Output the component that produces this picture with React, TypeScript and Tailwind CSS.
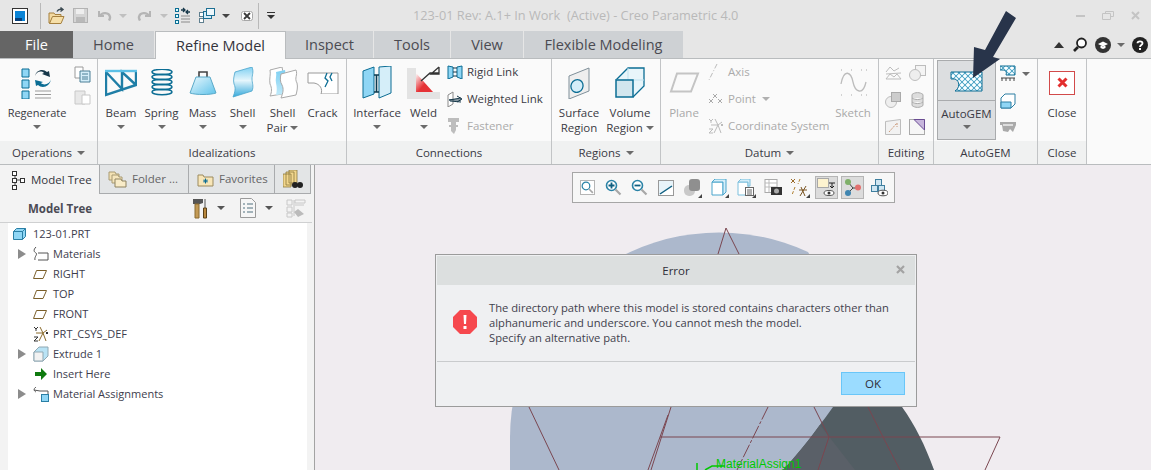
import type { ReactNode } from "react";

const blue = "#0b6d94";
const sky = "#8fd6f5";
const pale = "#d5eef9";

function Svg({ w, h, children, className }: { w: number; h: number; children: ReactNode; className?: string }) {
  return (
    <svg width={w} height={h} viewBox={`0 0 ${w} ${h}`} className={className} fill="none">
      {children}
    </svg>
  );
}

function Caret({ color = "#6b6b6b" }: { color?: string }) {
  return (
    <Svg w={8} h={4} className="shrink-0">
      <path d="M0 0h8L4 4z" fill={color} />
    </Svg>
  );
}

/* ---------- quick access icons ---------- */

function AppIcon() {
  return (
    <Svg w={16} h={16}>
      <rect x="0.500" y="0.500" width="15" height="15" fill="#fff" stroke="#333" />
      <rect x="3" y="3" width="10" height="10" fill="#0a84d6" />
      <path d="M3 10h7v3H3z" fill="#063f7a" />
    </Svg>
  );
}

function OpenIcon() {
  return (
    <Svg w={17} h={18}>
      <path d="M1 6h5l1 1.500h6v2.500H5L2 16H1z" fill="#f3d9a0" stroke="#a5803f" />
      <path d="M4.500 9.500H16L13 16.500H1.500z" fill="#f6dfa8" stroke="#a5803f" />
      <path d="M9 4.500C10 2.500 12 2 14 2.500M12.500 0.500l2.500 2-2.500 2" stroke="#3c4a52" strokeWidth="1.400" />
    </Svg>
  );
}

function SaveIcon() {
  return (
    <Svg w={15} h={15}>
      <rect x="0.500" y="0.500" width="14" height="14" fill="#d4d4d4" stroke="#b3b3b3" />
      <rect x="3" y="1" width="8" height="5" fill="#eee" />
      <rect x="3" y="9" width="9" height="5" fill="#b9b9b9" />
    </Svg>
  );
}

function UndoIcon({ flip }: { flip?: boolean }) {
  return (
    <Svg w={15} h={11} className={flip ? "-scale-x-100" : ""}>
      <path d="M2 1v5h5" stroke="#b5b5b5" strokeWidth="2" />
      <path d="M3 6c2-4 9-4 10 1 .2 1.200-.4 2.500-1 3.500" stroke="#b5b5b5" strokeWidth="2.400" />
    </Svg>
  );
}

function RegenSmall() {
  return (
    <Svg w={16} h={17}>
      <rect x="0.500" y="1.500" width="3" height="3" stroke={blue} fill="#dff" />
      <rect x="0.500" y="7.500" width="3" height="3" stroke={blue} fill="#dff" />
      <rect x="0.500" y="13.500" width="3" height="3" stroke={blue} fill="#dff" />
      <path d="M6 9h9M6 12h9M6 15h9" stroke="#8a8a8a" />
      <path d="M6 3h4M8 1l2 2-2 2M15 5h-4M13 3l-2 2 2 2" stroke="#17384a" strokeWidth="1.300" />
    </Svg>
  );
}

function WindowsIcon() {
  return (
    <Svg w={16} h={15}>
      <rect x="0.500" y="4.500" width="4" height="4" fill="#fff" stroke="#5f7f8f" />
      <rect x="0.500" y="10.500" width="4" height="4" fill="#fff" stroke="#5f7f8f" />
      <rect x="4.500" y="3.500" width="8" height="7" fill="#d6edf8" stroke="#1c6f93" />
      <rect x="7.500" y="0.500" width="8" height="7" fill="#eef7fb" stroke="#1c6f93" />
    </Svg>
  );
}

function CloseWinIcon() {
  return (
    <Svg w={12} h={10}>
      <rect x="0.500" y="0.500" width="11" height="9" rx="2" fill="#fff" stroke="#a8a8a8" />
      <path d="M3 2l6 6M9 2L3 8" stroke="#3a3a3a" strokeWidth="1.800" />
    </Svg>
  );
}

function Sep() {
  return <div className="h-[26px] w-px bg-[#b9b9b9]" />;
}

/* ---------- ribbon icons ---------- */

function RegenerateIcon() {
  return (
    <Svg w={32} h={32}>
      <path d="M1 2h7v8H1zM1 13h7v8H1zM1 24h7v8H1z" fill={sky} stroke={blue} />
      <path d="M14 24h16M14 27.500h16M14 31h16" stroke="#9a9a9a" />
      <path d="M14 9c1-4 6-6 9-3l-2 1 8 3-1-6-2 1C22 1 15 3 14 9z" fill="#17384a" />
      <path d="M30 12c-1 5-7 7-10 4l2-1-8-2 1 6 2-1c4 4 12 2 13-6z" fill={blue} />
    </Svg>
  );
}

function BeamIcon() {
  return (
    <Svg w={32} h={28}>
      <path d="M1 3v23L31 16V3M1 3l16 17V3l14 13" stroke="#1f7ea6" strokeWidth="2.400" />
      <path d="M0 2h32" stroke="#5cc0e6" strokeWidth="2.400" />
    </Svg>
  );
}

function SpringIcon() {
  return (
    <Svg w={22} h={28}>
      {[3, 8, 13, 18, 23].map((y) => (
        <ellipse key={y} cx="11" cy={y} rx="10" ry="2.700" stroke={blue} strokeWidth="1.500" />
      ))}
    </Svg>
  );
}

function MassIcon() {
  return (
    <Svg w={28} h={25}>
      <path d="M10 7V2h8v5" stroke="#444" strokeWidth="1.600" />
      <path d="M7 7h14l6 16c-6 2-20 2-26 0z" fill="url(#m)" stroke="#5aa9c8" />
      <defs>
        <linearGradient id="m" x1="0" x2="1" y1="0" y2="1">
          <stop stopColor="#eaf8fe" />
          <stop offset="1" stopColor="#5fc3ea" />
        </linearGradient>
      </defs>
    </Svg>
  );
}

function ShellIcon() {
  return (
    <Svg w={22} h={31}>
      <path d="M3 5l17-5c2 5 0 8 0 12s2 7 0 12L1 30c2-5 3-9 1-13-1-4 0-8 1-12z" fill="url(#s)" stroke="#4aa5cc" strokeWidth=".8" />
      <defs>
        <linearGradient id="s" x1="0" x2="0" y1="0" y2="1">
          <stop stopColor="#7fd0f2" />
          <stop offset=".45" stopColor="#e6f6fc" />
          <stop offset="1" stopColor="#35a9db" />
        </linearGradient>
      </defs>
    </Svg>
  );
}

function ShellPairIcon() {
  return (
    <Svg w={32} h={32}>
      <path d="M3 3l12-3c2 5-1 9 0 14s1 9 0 13L3 29c2-4 2-8 0-12-1-5 1-10 0-14z" fill="#fff" stroke="#a9a9a9" />
      <path d="M9 5l9-2c1 5-1 8 0 12s1 8 0 12l-9 1c1-4 1-8 0-12-1-4 1-8 0-11z" fill="url(#s2)" />
      <path d="M14 7l15-4c2 5-2 8 1 13 1 4 0 8-1 12l-15 3c2-5 3-9 1-13-2-3-2-7-1-11z" fill="#fff" stroke="#a9a9a9" />
      <defs>
        <linearGradient id="s2" x1="0" x2="0" y1="0" y2="1">
          <stop stopColor="#7fd0f2" />
          <stop offset="1" stopColor="#bfe9f9" />
        </linearGradient>
      </defs>
    </Svg>
  );
}

function CrackIcon() {
  return (
    <Svg w={32} h={22}>
      <path d="M1 1h30v21H14c2-5-1-10-7-11H1z" fill="#fff" stroke="#9a9a9a" />
      <path d="M20 1l-2 5 3 3-3 6M25 1l-2 4 2 4" stroke={blue} strokeWidth="1.300" />
    </Svg>
  );
}

function InterfaceIcon() {
  return (
    <Svg w={30} h={33}>
      <path d="M1 5l11-4v27L1 32z" fill={sky} stroke={blue} />
      <path d="M17 1l12-1v27l-12 5z" fill={pale} stroke={blue} />
      <path d="M12 9h5M12 26h5M14.500 9v17" stroke="#0b3a4f" strokeWidth="1.600" />
    </Svg>
  );
}

function WeldIcon() {
  return (
    <Svg w={33} h={33}>
      <path d="M0 2h9v24h24v7H0z" fill="#e3e3e3" />
      <path d="M9 7v19h17z" fill="url(#w)" />
      <path d="M14 15l9-8h9M32 1v7h-8l8-7" stroke="#333" strokeWidth="1.300" />
      <defs>
        <linearGradient id="w" x1="0" x2="1" y1="0" y2="1">
          <stop stopColor="#fff" />
          <stop offset=".55" stopColor="#e53236" />
        </linearGradient>
      </defs>
    </Svg>
  );
}

function RigidIcon() {
  return (
    <Svg w={16} h={15}>
      <path d="M1 2l5 1v10l-5 2z" fill={sky} stroke={blue} />
      <path d="M15 2l-5 1v10l5 2z" fill={sky} stroke={blue} />
      <path d="M6 4h4M6 8h4M6 12h4" stroke="#17384a" />
    </Svg>
  );
}

function WeightedIcon() {
  return (
    <Svg w={17} h={16}>
      <path d="M1 4l5-3v12l-5 3z" fill="#fff" stroke="#8a8a8a" />
      <path d="M2 9l12-2M2 9l12 0M3 10l11 1M10 5l5 3-5 3" stroke="#17384a" />
    </Svg>
  );
}

function FastenerIcon() {
  return (
    <Svg w={13} h={16}>
      <path d="M1 0h11v4H1zM4 4h5v8l-2 4-3-3zM2 7h9v2H2z" fill="#bdbdbd" />
    </Svg>
  );
}

function SurfaceIcon() {
  return (
    <Svg w={22} h={32}>
      <path d="M1 9l20-8v23L1 32z" fill="#eee" stroke="#7f8f99" />
      <ellipse cx="9" cy="19" rx="6" ry="6.500" transform="rotate(25 9 19)" fill={pale} stroke={blue} strokeWidth="1.300" />
    </Svg>
  );
}

function VolumeIcon() {
  return (
    <Svg w={30} h={31}>
      <path d="M1 13L13 1h16v18L18 30" fill="#e8f5fa" stroke={blue} strokeWidth="1.300" />
      <path d="M13 1v12M13 13h16M13 13L1 13" stroke="#bfe1ee" />
      <rect x="1" y="13" width="17" height="17" fill="#d2e6ee" stroke={blue} strokeWidth="1.500" />
    </Svg>
  );
}

function PlaneIcon() {
  return (
    <Svg w={31} h={21}>
      <path d="M8 1.500h21L22 19.500H2z" fill="#fafafa" stroke="#c4c4c4" strokeWidth="2" />
    </Svg>
  );
}

function AxisIcon() {
  return (
    <Svg w={10} h={16}>
      <path d="M9 0L1 16" stroke="#bbb" strokeDasharray="5 2 1 2" />
    </Svg>
  );
}

function PointIcon() {
  return (
    <Svg w={15} h={14}>
      <path d="M1 5l4 4M5 5L1 9M5 0l4 4M9 0L5 4M10 5l4 4M14 5l-4 4" stroke="#aaa" transform="translate(0 2)" />
    </Svg>
  );
}

function CsysIcon({ color = "#bbb", line = "#bbb" }: { color?: string; line?: string }) {
  return (
    <Svg w={16} h={16}>
      <path d="M7 1l3 6 4-3M10 7l-4 8M10 7l3 8M3 7l7 0" stroke={line} />
      <path d="M1 1l2 2v2M5 1L3 3M1 11h4l-4 4h4M13 6l2 2M15 6l-2 2" stroke={color} />
    </Svg>
  );
}

function SketchIcon() {
  return (
    <Svg w={28} h={28}>
      <path d="M2 1h1M12 1h1M22 1h1M27 1h1M2 26h1M12 26h1M22 26h1M27 26h1" stroke="#aaa" />
      <path d="M2 15C5-1 12 3 14 13s10 14 13 0" stroke="#bcbcbc" strokeWidth="1.300" />
    </Svg>
  );
}

function EditIcon({ kind }: { kind: number }) {
  const grey = "#bdbdbd";
  return (
    <Svg w={17} h={16}>
      {kind === 0 && <path d="M1 14h15L12 9l-3 3-4-3zM1 7l4-5 4 4 5-3M1 9l15-1" stroke={grey} />}
      {kind === 1 && (
        <>
          <rect x="6.500" y="0.500" width="10" height="10" fill="#f4f4f4" stroke={grey} />
          <circle cx="6" cy="10" r="5.500" fill="#eee" stroke={grey} />
        </>
      )}
      {kind === 2 && (
        <>
          <circle cx="6" cy="10" r="5.500" fill="#eee" stroke={grey} />
          <rect x="6.500" y="0.500" width="9" height="9" fill="#ccc" stroke="#aaa" />
        </>
      )}
      {kind === 3 && (
        <path d="M3 2.500C6 0 11 0 14 2.500v11c-3 2.500-8 2.500-11 0zM3 6c3 2 8 2 11 0M3 10c3 2 8 2 11 0" fill="#ddd" stroke="#aaa" />
      )}
      {kind === 4 && (
        <>
          <path d="M0.500 15.500v-13l15-2v15z" fill="#f2f2f2" stroke={grey} />
          <path d="M4 13l8-9M12 4v4" stroke="#cc9a7a" strokeDasharray="2 1" />
        </>
      )}
      {kind === 5 && (
        <>
          <rect x="0.500" y="0.500" width="15" height="15" fill="#f6f6f6" stroke="#aaa" />
          <path d="M5 0.500h10.500V11z" fill="#c7b6dc" stroke="#6a4c93" />
        </>
      )}
    </Svg>
  );
}

function AutoGemIcon() {
  return (
    <Svg w={33} h={22}>
      <defs>
        <pattern id="mesh" width="6" height="6" patternUnits="userSpaceOnUse">
          <rect width="6" height="6" fill="#b9e6f6" />
          <path d="M0 0l6 6M6 0L0 6" stroke="#2d8bb0" strokeWidth=".7" />
          <circle cx="3" cy="0" r="1.600" fill="#fff" />
          <circle cx="3" cy="6" r="1.600" fill="#fff" />
          <circle cx="0" cy="3" r="1.600" fill="#fff" />
          <circle cx="6" cy="3" r="1.600" fill="#fff" />
        </pattern>
      </defs>
      <path d="M1 2h31v19H5c5-3 5-10 0-12H1z" fill="url(#mesh)" stroke={blue} />
    </Svg>
  );
}

function MeshSmall() {
  return (
    <Svg w={16} h={18}>
      <path d="M0 1h15v9H6c1-3 0-5-4-5H0z" fill="url(#mesh)" stroke={blue} />
      <path d="M1 13h14M2 13v3M6 13v3M10 13v3M14 13v3" stroke="#444" />
    </Svg>
  );
}

function BoxSmall() {
  return (
    <Svg w={16} h={16}>
      <path d="M1 5l4-4h10v10l-4 4H1z" fill="#fff" stroke="#2c7fa3" />
      <path d="M1 9h10v6H1z" fill={sky} stroke="#2c7fa3" />
    </Svg>
  );
}

function GemGrey() {
  return (
    <Svg w={16} h={11}>
      <path d="M0 0h16v3l-3 7-3-3-2 3-5-1-1-6H0z" fill="#aaa" />
      <path d="M3 2h10v2H3z" fill="#ddd" />
    </Svg>
  );
}

/* ---------- canvas toolbar ---------- */

function Mag({ sign }: { sign?: "+" | "-" }) {
  return (
    <Svg w={17} h={17}>
      <circle cx="6.500" cy="6.500" r="5" fill="#fff" stroke="#2b83a6" strokeWidth="1.600" />
      <path d="M10.500 10.500l5 5" stroke="#a8a8a8" strokeWidth="2.200" />
      {sign && <path d={sign === "+" ? "M3.500 6.500h6M6.500 3.500v6" : "M3.500 6.500h6"} stroke="#0f5f80" strokeWidth="1.800" />}
    </Svg>
  );
}

function ToolBtn({ children, on, tick, extra }: { children: ReactNode; on?: boolean; tick?: boolean; extra?: boolean }) {
  return (
    <div
      className={`relative flex h-[23px] w-[23px] shrink-0 items-center justify-center border ${
        on ? "border-[#b5b5b5] bg-[#dcdcdc]" : "border-transparent"
      } ${extra ? "ml-[1px]" : ""}`}
    >
      {children}
      {tick && <span className="absolute right-0 bottom-0 h-0 w-0 border-b-[4px] border-l-[4px] border-b-[#444] border-l-transparent" />}
    </div>
  );
}

function ViewToolbar() {
  return (
    <div className="absolute top-[7px] left-[257px] flex h-[31px] w-[323px] items-center gap-[3px] border border-[#a6a6a6] bg-[#f7f7f7] pl-[3px]">
      <ToolBtn>
        <div className="flex h-[15px] w-[15px] items-center justify-center border border-[#b5b5b5] bg-white">
          <Mag />
        </div>
      </ToolBtn>
      <ToolBtn><Mag sign="+" /></ToolBtn>
      <ToolBtn><Mag sign="-" /></ToolBtn>
      <ToolBtn>
        <Svg w={16} h={16}>
          <rect x="0.500" y="0.500" width="15" height="15" fill="#e8f4fa" stroke="#999" />
          <path d="M1 15L15 6v9z" fill="#fff" />
          <path d="M2 14L14 6" stroke="#0f5f80" strokeWidth="1.500" />
        </Svg>
      </ToolBtn>
      <ToolBtn tick>
        <Svg w={17} h={17}>
          <rect x="1" y="6" width="11" height="11" rx="5" fill="#c9c9c9" />
          <rect x="6" y="0" width="11" height="12" rx="3" fill="#8f8f8f" />
        </Svg>
      </ToolBtn>
      <ToolBtn tick extra>
        <Svg w={16} h={17}>
          <path d="M1 3h11v13H1z" fill="#fff" stroke="#4aa5cc" />
          <path d="M1 3l3-3h11v13l-3 3V3z" fill={pale} stroke="#4aa5cc" />
        </Svg>
      </ToolBtn>
      <ToolBtn tick extra>
        <Svg w={17} h={17}>
          <path d="M1 3h10v13H1z" fill="#fff" stroke="#7cc0dd" />
          <path d="M1 3l3-3h9v7h-2V3z" fill={pale} stroke="#7cc0dd" />
          <rect x="8.500" y="8.500" width="8" height="8" fill="#fff" stroke="#666" />
          <path d="M10 11h5M10 13h5M10 15h5" stroke="#666" />
        </Svg>
      </ToolBtn>
      <ToolBtn extra>
        <Svg w={18} h={17}>
          <rect x="1" y="0.500" width="12" height="13" fill="#fff" stroke="#aaa" />
          <path d="M1 4h12M1 8h12M5 1v12" stroke="#bbb" />
          <rect x="7" y="8" width="11" height="8" fill="#333" />
          <circle cx="12.500" cy="12" r="2.500" fill="#aaa" />
        </Svg>
      </ToolBtn>
      <ToolBtn tick extra>
        <Svg w={19} h={19}>
          <path d="M1 1l4 4M5 1L1 5" stroke="#9a6a2a" />
          <path d="M10 1l-2 5M5 9l-3 8" stroke="#b08030" strokeDasharray="3 1.500" />
          <path d="M11 9l4 9M16 8l-6 10M9 12h8" stroke="#7a5522" />
        </Svg>
      </ToolBtn>
      <ToolBtn on extra>
        <Svg w={19} h={19}>
          <rect x="0.500" y="0.500" width="11" height="9" fill="#fdf3d0" stroke="#a8a8a8" />
          <path d="M12 5h6M15 5v5M13 8l2 2 2-2" stroke="#222" />
          <ellipse cx="12" cy="15" rx="5" ry="2.500" fill="#fff" stroke="#555" />
          <circle cx="12" cy="15" r="1.500" fill="#333" />
        </Svg>
      </ToolBtn>
      <ToolBtn on>
        <Svg w={18} h={17}>
          <path d="M4 3l5 6-5 5M9 9h7" stroke="#444" />
          <circle cx="4" cy="3" r="3" fill="#7fb069" />
          <circle cx="14" cy="8.500" r="3" fill="#e2716f" />
          <circle cx="4" cy="14" r="3" fill="#3f85b0" />
        </Svg>
      </ToolBtn>
      <ToolBtn>
        <Svg w={18} h={18}>
          <rect x="5.500" y="0.500" width="6" height="6" fill="#cfe6f2" stroke="#3f7f9f" />
          <rect x="1.500" y="6.500" width="6" height="6" fill="#cfe6f2" stroke="#3f7f9f" />
          <rect x="8.500" y="6.500" width="6" height="6" fill="#cfe6f2" stroke="#3f7f9f" />
          <ellipse cx="13" cy="14" rx="5" ry="2.800" fill="#fff" stroke="#555" />
          <circle cx="13" cy="14" r="1.500" fill="#333" />
        </Svg>
      </ToolBtn>
    </div>
  );
}

/* ---------- ribbon pieces ---------- */

function Large({ icon, label, second, caret, w, dim }: { icon: ReactNode; label: string; second?: string; caret?: boolean; w: number; dim?: boolean }) {
  return (
    <div className={`flex shrink-0 flex-col items-center ${dim ? "text-[#a9a9a9]" : ""}`} style={{ width: w }}>
      <div className="flex h-[37px] items-center justify-center">{icon}</div>
      <div className="mt-[4px] leading-[15px] whitespace-nowrap">{label}</div>
      {second ? (
        <div className="flex items-center gap-[3px] leading-[15px] whitespace-nowrap">
          {second}
          {caret && <Caret />}
        </div>
      ) : (
        caret && (
          <div className="mt-[5px]">
            <Caret />
          </div>
        )
      )}
    </div>
  );
}

function SmallRow({ icon, label, dim, caret }: { icon: ReactNode; label: string; dim?: boolean; caret?: boolean }) {
  return (
    <div className={`flex h-[27px] items-center whitespace-nowrap ${dim ? "text-[#ababab]" : ""}`}>
      <div className="flex w-[20px] shrink-0 items-center">{icon}</div>
      {label}
      {caret && (
        <span className="ml-[6px]">
          <Caret color="#b0b0b0" />
        </span>
      )}
    </div>
  );
}

function Group({ w, label, caret, children, pad = "" }: { w: number; label: string; caret?: boolean; children: ReactNode; pad?: string }) {
  return (
    <div className="flex shrink-0 flex-col border-r border-[#c2c4c6]" style={{ width: w }}>
      <div className={`flex h-[83px] pt-[5px] ${pad}`}>{children}</div>
      <div className="flex h-[23px] items-center justify-center gap-[5px] bg-[#f0f1f1] whitespace-nowrap">
        {label}
        {caret && <Caret />}
      </div>
    </div>
  );
}

function Ribbon() {
  return (
    <div className="flex h-[107px] border-t border-b border-[#b9bcbe] bg-[#fafafa]">
      <Group w={98} label="Operations" caret>
        <div className="ml-[7px] text-[11px]">
          <Large icon={<RegenerateIcon />} label="Regenerate" caret w={60} />
        </div>
        <div className="mt-[2px] ml-[7px] flex flex-col gap-[5px]">
          <Svg w={17} h={17}>
            <path d="M1 1h8v11H1z" fill="#fff" stroke="#9a9a9a" />
            <path d="M6 5h10v11H6z" fill={pale} stroke="#4b7f96" />
            <path d="M8 8h6M8 11h6M8 13h6" stroke="#4b7f96" />
          </Svg>
          <Svg w={17} h={17}>
            <path d="M1 3h10v13H1z" fill="#e8e8e8" stroke="#c8c8c8" />
            <path d="M8 7h8v9H8z" fill="#fff" stroke="#c8c8c8" />
          </Svg>
        </div>
      </Group>
      <Group w={249} label="Idealizations" pad="pl-[3px]">
        <Large icon={<BeamIcon />} label="Beam" caret w={40} />
        <Large icon={<SpringIcon />} label="Spring" caret w={41} />
        <Large icon={<MassIcon />} label="Mass" caret w={41} />
        <Large icon={<ShellIcon />} label="Shell" caret w={39} />
        <Large icon={<ShellPairIcon />} label="Shell" second="Pair" caret w={41} />
        <Large icon={<CrackIcon />} label="Crack" w={39} />
      </Group>
      <Group w={205} label="Connections" pad="pl-[4px]">
        <Large icon={<InterfaceIcon />} label="Interface" caret w={52} />
        <Large icon={<WeldIcon />} label="Weld" caret w={41} />
        <div className="-mt-[6px] ml-[3px] flex flex-col">
          <SmallRow icon={<RigidIcon />} label="Rigid Link" />
          <SmallRow icon={<WeightedIcon />} label="Weighted Link" />
          <SmallRow icon={<FastenerIcon />} label="Fastener" dim />
        </div>
      </Group>
      <Group w={109} label="Regions" caret pad="pl-[2px]">
        <Large icon={<SurfaceIcon />} label="Surface" second="Region" w={50} />
        <Large icon={<VolumeIcon />} label="Volume" second="Region" caret w={52} />
      </Group>
      <Group w={218} label="Datum" caret pad="pl-[4px]">
        <Large icon={<PlaneIcon />} label="Plane" w={38} dim />
        <div className="-mt-[6px] ml-[5px] flex w-[126px] shrink-0 flex-col">
          <SmallRow icon={<AxisIcon />} label="Axis" dim />
          <SmallRow icon={<PointIcon />} label="Point" dim caret />
          <SmallRow icon={<CsysIcon />} label="Coordinate System" dim />
        </div>
        <Large icon={<SketchIcon />} label="Sketch" w={38} dim />
      </Group>
      <Group w={55} label="Editing">
        <div className="-mt-[5px] grid grid-cols-2 content-start gap-x-[7px] gap-y-[11px] pt-[6px] pl-[6px]">
          {[0, 1, 2, 3, 4, 5].map((k) => (
            <EditIcon key={k} kind={k} />
          ))}
        </div>
      </Group>
      <Group w={104} label="AutoGEM">
        <div className="-mt-[4px] ml-[3px] flex h-[80px] w-[59px] flex-col items-center border border-[#a9abad] bg-[#dcdee0]">
          <div className="flex h-[40px] w-full items-center justify-center border-b border-[#a9abad]">
            <AutoGemIcon />
          </div>
          <div className="mt-[5px] leading-[15px]">AutoGEM</div>
          <div className="mt-[4px]">
            <Caret />
          </div>
        </div>
        <div className="-mt-[5px] ml-[4px] flex flex-col pt-[6px]">
          <div className="flex items-center gap-[6px]">
            <MeshSmall />
            <Caret />
          </div>
          <div className="mt-[10px]">
            <BoxSmall />
          </div>
          <div className="mt-[13px]">
            <GemGrey />
          </div>
        </div>
      </Group>
      <Group w={49} label="Close">
        <Large
          w={48}
          label="Close"
          icon={
            <div className="flex h-[24px] w-[26px] items-center justify-center border border-[#d24a4a] bg-white">
              <Svg w={11} h={11}>
                <path d="M1.500 1.500l8 8M9.500 1.500l-8 8" stroke="#e32f2f" strokeWidth="3" />
              </Svg>
            </div>
          }
        />
      </Group>
    </div>
  );
}

function TopTab({ label, w, active, file }: { label: string; w: number; active?: boolean; file?: boolean }) {
  return (
    <div
      className={`flex h-[27px] shrink-0 items-center justify-center text-[14.5px] ${
        file
          ? "bg-[#656565] text-white"
          : active
            ? "relative z-10 -mb-px h-[28px] border-t border-l border-r border-[#b9bcbe] bg-[#fafafa] text-[#33333b]"
            : "mr-px bg-[#ced1d4] text-[#4b4b52]"
      }`}
      style={{ width: w }}
    >
      {label}
    </div>
  );
}

/* ---------- left panel ---------- */

function PanelTab({ w, label, icon, active }: { w: number; label: string; icon: ReactNode; active?: boolean }) {
  return (
    <div
      className={`flex h-[29px] shrink-0 items-center gap-[5px] border-r border-[#a9abad] pl-[3px] whitespace-nowrap ${
        active ? "bg-[#f3f3f3] text-[#33333b]" : "border-b bg-[#e3e5e6] text-[#666]"
      }`}
      style={{ width: w }}
    >
      {icon}
      {label}
    </div>
  );
}

function TreeArrow() {
  return (
    <Svg w={8} h={10}>
      <path d="M0 0l8 5-8 5z" fill="#8c8c8c" />
    </Svg>
  );
}

function PlaneGlyph() {
  return (
    <Svg w={14} h={9}>
      <path d="M3.500 0.500h10L10 8.500H0.500z" stroke="#7b5f2a" />
    </Svg>
  );
}

function TreeRow({ icon, label, arrow }: { icon: ReactNode; label: string; arrow?: boolean }) {
  return (
    <div className="flex h-[20px] items-center whitespace-nowrap">
      <div className="ml-[10px] flex w-[15px] shrink-0">{arrow && <TreeArrow />}</div>
      <div className="flex w-[17px] shrink-0 items-center">{icon}</div>
      <span className="ml-[3px]">{label}</span>
    </div>
  );
}

function ModelPanel() {
  return (
    <div className="flex w-[315px] shrink-0 flex-col border-r border-[#a3a3a3] bg-[#f3f3f3] pr-[2px]">
      <div className="flex pl-[8px]">
        <PanelTab
          w={92}
          active
          label="Model Tree"
          icon={
            <Svg w={15} h={22}>
              <path d="M4 5v13M4 11h6M4 5v0" stroke="#444" />
              <rect x="1.500" y="2.500" width="4" height="4" fill="#fff" stroke="#333" />
              <rect x="1.500" y="9.500" width="4" height="4" fill="#fff" stroke="#333" />
              <rect x="1.500" y="16.500" width="4" height="4" fill="#fff" stroke="#333" />
              <rect x="9.500" y="9.500" width="4" height="4" fill="#fff" stroke="#333" />
            </Svg>
          }
        />
        <PanelTab
          w={89}
          label="Folder ..."
          icon={
            <Svg w={19} h={18} className="ml-[5px]">
              <path d="M1 2h6l1 2h3v6H1z" fill="#f4e2b4" stroke="#a89a72" />
              <path d="M4 5h6l1 2h3v6H4z" fill="#f6e6bc" stroke="#a89a72" />
              <path d="M7 9h6l1 2h4v6H7z" fill="#f9ecc8" stroke="#8f8360" />
            </Svg>
          }
        />
        <PanelTab
          w={86}
          label="Favorites"
          icon={
            <Svg w={17} h={15} className="ml-[5px]">
              <path d="M1 3h5l1 2h9v9H1z" fill="#f8e6b8" stroke="#9b8a5f" />
              <path d="M8.500 6.500v5M6 9h5M7 7.500l3 3M10 7.500l-3 3" stroke={blue} />
            </Svg>
          }
        />
        <PanelTab
          w={36}
          label=""
          icon={
            <Svg w={20} h={19} className="ml-[5px]">
              <path d="M6 0h8v13H6zM3 2h8v13H3zM0 4h8v13H0z" fill="#f2d68c" stroke="#8c7a40" strokeWidth=".8" />
              <circle cx="12" cy="15" r="3" fill="#222" />
              <circle cx="17" cy="15" r="3" fill="#222" />
            </Svg>
          }
        />
      </div>
      <div className="flex h-[29px] items-center border-b border-[#cfd0d1] pr-[6px] pl-[28px]">
        <span className="mt-[2px] font-bold text-[#4b4b55]">Model Tree</span>
        <div className="ml-auto flex items-center">
          <Svg w={16} h={21}>
            <path d="M1 1h10v4l-3 1H1z" fill="#555" />
            <path d="M3 6h4v14H3z" fill="#c39a55" stroke="#8a6a30" />
            <path d="M13 1v9" stroke="#888" strokeWidth="1.500" />
            <path d="M11.500 10h3v10h-3z" fill="#b8873d" stroke="#5a4016" />
          </Svg>
          <span className="mr-[15px] ml-[9px]">
            <Caret color="#555" />
          </span>
          <Svg w={16} h={20}>
            <path d="M0.500 0.500h11l4 4v15H0.500z" fill="#f6f6f6" stroke="#9a9a9a" />
            <path d="M3 6h2M7 6h6M3 10h2M7 10h6M3 14h2M7 14h6" stroke="#50707f" />
          </Svg>
          <span className="mr-[13px] ml-[9px]">
            <Caret color="#555" />
          </span>
          <Svg w={20} h={19}>
            <path d="M1 1h5v5H1zM1 8h5v5H1zM1 14h5v4H1zM9 1h10v3H9zM9 6h9M8 1v16" stroke="#c8c8c8" />
            <path d="M8 13l4-3 6 5-6 3z" fill="#bbb" />
          </Svg>
        </div>
      </div>
      <div className="mr-[5px] ml-[8px] min-h-0 flex-1 bg-white pt-[1px] text-[11px] text-[#3d3d4d]">
        <div className="flex h-[20px] items-center pl-[5px]">
          <Svg w={13} h={12}>
            <path d="M0.500 3.500l3-3h9v8l-3 3h-9z" fill={sky} stroke="#2a7fa5" />
            <path d="M0.500 3.500h9v8M9.500 3.500l3-3" stroke="#2a7fa5" />
          </Svg>
          <span className="ml-[7px]">123-01.PRT</span>
        </div>
        <TreeRow
          arrow
          label="Materials"
          icon={
            <Svg w={16} h={14}>
              <path d="M3 0C0 3 1 5 3 6S1 10 2 13M5 6h10v7H5" stroke="#555" />
            </Svg>
          }
        />
        <TreeRow label="RIGHT" icon={<PlaneGlyph />} />
        <TreeRow label="TOP" icon={<PlaneGlyph />} />
        <TreeRow label="FRONT" icon={<PlaneGlyph />} />
        <TreeRow label="PRT_CSYS_DEF" icon={<CsysIcon color="#333" line="#8a6a2a" />} />
        <TreeRow
          arrow
          label="Extrude 1"
          icon={
            <Svg w={16} h={16}>
              <path d="M1 6l5-5h9v9l-5 5H1z" fill="#b9e3f5" stroke="#90a8b3" />
              <path d="M1 6h9v9H1z" fill="#f2f2f2" stroke="#90a8b3" />
            </Svg>
          }
        />
        <TreeRow
          label="Insert Here"
          icon={
            <Svg w={13} h={12} className="ml-[2px]">
              <path d="M0 4h6V0l6 6-6 6V8H0z" fill="#0f7a0f" />
            </Svg>
          }
        />
        <TreeRow
          arrow
          label="Material Assignments"
          icon={
            <Svg w={16} h={15}>
              <path d="M3 0C0 2 1 4 3 5M1 3l6 1h8v3" stroke="#555" />
              <rect x="8.500" y="7.500" width="7" height="7" fill={sky} stroke="#2a7fa5" />
            </Svg>
          }
        />
      </div>
    </div>
  );
}

/* ---------- canvas ---------- */

function Model() {
  const line = "#7a4650";
  return (
    <svg className="absolute inset-0 h-full w-full" viewBox="315 165 836 305" fill="none">
      <path d="M510 470V437A209 205 0 0 1 808 252L902 407L934 470z" fill="#acb8cc" />
      <path d="M833 407C815 432 800 452 783 470H934C925 445 915 425 902 407z" fill="#525d63" />
      <path d="M833 407C815 432 800 452 783 470H855L820 425z" fill="#5a6068" />
      <g stroke={line}>
        <path d="M718 254L726 228L739 254" />
        <path d="M529 407L559 470" />
        <path d="M671 407L651 470M668 415L648 470" />
        <path d="M768 407L737 470" strokeDasharray="14 2 3 2" />
        <path d="M814 407L829 437L818 470" />
        <path d="M868 407L883 437L900 470" />
        <path d="M660 437H1000L985 470" />
      </g>
      <path d="M697 470V463M705 470L712 466H725" stroke="#00c800" strokeWidth="1.500" />
    </svg>
  );
}

function ErrorDialog() {
  return (
    <div className="absolute top-[89px] left-[120px] flex h-[153px] w-[482px] flex-col border border-[#9b9b9b] bg-[#eff0f2] p-px text-[11.2px] text-[#3f3f4d]">
      <div className="relative flex h-[29px] shrink-0 items-center justify-center bg-[#dcdfdf] text-[11.5px] text-[#2e2e38]">
        Error
        <Svg w={9} h={9} className="absolute top-[9px] right-[10px]">
          <path d="M1 1l7 7M8 1L1 8" stroke="#a3a3a3" strokeWidth="2.200" />
        </Svg>
      </div>
      <div className="flex h-[77px] shrink-0 items-center border-b border-[#c9cbcd] pb-[2px] pl-[16px]">
        <Svg w={24} h={24} className="shrink-0">
          <path d="M7 0h10l7 7v10l-7 7H7l-7-7V7z" fill="#f6484e" />
          <path d="M10.500 5h3l-.5 9h-2z" fill="#fff" />
          <rect x="10.500" y="16" width="3" height="3" fill="#fff" />
        </Svg>
        <p className="ml-[12px] leading-[15px]">
          The directory path where this model is stored contains characters other than
          <br />
          alphanumeric and underscore. You cannot mesh the model.
          <br />
          Specify an alternative path.
        </p>
      </div>
      <div className="flex flex-1 justify-end pt-[10px] pr-[10px]">
        <div className="flex h-[23px] w-[64px] items-center justify-center border border-[#69c6f8] bg-[#9bdcff] text-[11.5px] text-[#2e2e38]">OK</div>
      </div>
    </div>
  );
}

export default function App() {
  return (
    <div className="relative flex h-[470px] w-[1151px] flex-col overflow-hidden bg-[#e6e6e6] text-[11.5px] text-[#3a3a44] [font-family:'Open_Sans','Noto_Sans',sans-serif]">
      <div className="flex h-[31px] shrink-0 items-center pl-[12px]">
        <AppIcon />
        <div className="mr-[7px] ml-[12px]">
          <Sep />
        </div>
        <OpenIcon />
        <div className="mr-[9px] ml-[8px]">
          <SaveIcon />
        </div>
        <UndoIcon />
        <div className="mr-[10px] ml-[7px]">
          <Caret color="#c0c0c0" />
        </div>
        <UndoIcon flip />
        <div className="mr-[7px] ml-[8px]">
          <Caret color="#c0c0c0" />
        </div>
        <RegenSmall />
        <div className="ml-[8px]">
          <WindowsIcon />
        </div>
        <div className="mr-[11px] ml-[7px]">
          <Caret color="#444" />
        </div>
        <CloseWinIcon />
        <div className="mr-[8px] ml-[5px]">
          <Sep />
        </div>
        <Svg w={8} h={7}>
          <path d="M0 0h8v1H0zM0 3h8L4 7z" fill="#333" />
        </Svg>
        <span className="ml-[138px] whitespace-pre text-[12.75px] text-[#b9b9b9]">123-01 Rev: A.1+ In Work  (Active) - Creo Parametric 4.0</span>
        <div className="mr-[11px] ml-auto flex items-center gap-[17px]">
          <div className="h-[2px] w-[9px] bg-[#c4c4c4]" />
          <Svg w={12} h={9}>
            <path d="M3.500 2.500V0.500h8v5h-3M0.500 2.500h8v6h-8z" stroke="#c4c4c4" />
          </Svg>
          <Svg w={9} h={9}>
            <path d="M1 1l7 7M8 1L1 8" stroke="#c4c4c4" strokeWidth="2" />
          </Svg>
        </div>
      </div>

      <div className="flex h-[27px] shrink-0 items-end">
        <TopTab label="File" w={73} file />
        <TopTab label="Home" w={81} />
        <TopTab label="Refine Model" w={131} active />
        <TopTab label="Inspect" w={87} />
        <TopTab label="Tools" w={76} />
        <TopTab label="View" w={72} />
        <TopTab label="Flexible Modeling" w={159} />
        <div className="mb-[5px] ml-auto flex items-center pr-[3px]">
          <Svg w={10} h={6}>
            <path d="M0 6l5-6 5 6z" fill="#333" />
          </Svg>
          <Svg w={16} h={16} className="ml-[8px]">
            <circle cx="9.500" cy="6" r="4.500" fill="#fff" stroke="#222" strokeWidth="1.800" />
            <path d="M6 10l-4 4" stroke="#222" strokeWidth="2.600" />
          </Svg>
          <Svg w={16} h={16} className="ml-[7px]">
            <circle cx="8" cy="8" r="8" fill="#333" />
            <path d="M3 7l5-2.500L13 7l-5 2.500zM5.500 9v2l2.500 1 2.500-1V9" fill="#fff" />
          </Svg>
          <div className="mr-[7px] ml-[6px]">
            <Caret />
          </div>
          <Svg w={16} h={16}>
            <circle cx="8" cy="8" r="8" fill="#222" />
            <path d="M5.500 6.200C5.500 3.800 10.500 3.800 10.500 6.200 10.500 8 8 8 8 10" stroke="#fff" strokeWidth="1.800" />
            <rect x="7" y="11" width="2" height="2" fill="#fff" />
          </Svg>
        </div>
      </div>

      <Ribbon />

      <div className="flex min-h-0 flex-1">
        <ModelPanel />
        <div className="relative min-w-0 flex-1 bg-[#f0ecf0]">
          <Model />
          <span className="absolute top-[293px] left-[401px] text-[12px] leading-[13px] text-[#00c800] [font-family:'Liberation_Sans',sans-serif]">MaterialAssign1</span>
          <ViewToolbar />
          <ErrorDialog />
        </div>
      </div>

      <Svg w={50} h={70} className="pointer-events-none absolute top-[10px] left-[970px]">
        <path d="M36 1L46 8L23 47L30 49L3 68L4 37L15 40z" fill="#28344a" />
      </Svg>
    </div>
  );
}
